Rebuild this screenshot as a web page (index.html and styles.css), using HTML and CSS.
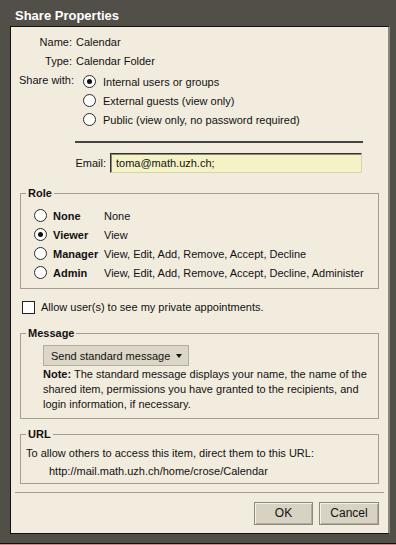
FILE: index.html
```html
<!DOCTYPE html>
<html lang="en">
<head>
  <meta charset="UTF-8" />
  <title>Share Properties</title>
  <link rel="stylesheet" href="styles.css">
</head>
<body>
  <div class="dialog">
    <div class="titlebar">Share Properties</div>

    <div class="panel">
      <div class="props">
        <div class="prop"><span class="prop-label">Name:</span><span>Calendar</span></div>
        <div class="prop"><span class="prop-label">Type:</span><span>Calendar Folder</span></div>
        <div class="prop share">
          <span class="prop-label">Share with:</span>
          <div class="share-opts">
            <div class="opt"><span class="radio on"></span>Internal users or groups</div>
            <div class="opt"><span class="radio"></span>External guests (view only)</div>
            <div class="opt"><span class="radio"></span>Public (view only, no password required)</div>
          </div>
        </div>
      </div>

      <div class="rule"></div>

      <div class="email-row">
        <span class="email-label">Email:</span>
        <div class="email-input">toma@math.uzh.ch;</div>
      </div>

      <fieldset class="box role">
        <legend>Role</legend>
        <div class="role-list">
          <div class="role-row"><span class="radio"></span><span class="role-name">None</span><span>None</span></div>
          <div class="role-row"><span class="radio on"></span><span class="role-name">Viewer</span><span>View</span></div>
          <div class="role-row"><span class="radio"></span><span class="role-name">Manager</span><span>View, Edit, Add, Remove, Accept, Decline</span></div>
          <div class="role-row"><span class="radio"></span><span class="role-name">Admin</span><span>View, Edit, Add, Remove, Accept, Decline, Administer</span></div>
        </div>
      </fieldset>

      <div class="check-row"><span class="checkbox"></span>Allow user(s) to see my private appointments.</div>

      <fieldset class="box message">
        <legend>Message</legend>
        <div class="message-body">
          <div class="dropdown">Send standard message<span class="caret"></span></div>
          <p class="note"><b>Note:</b> The standard message displays your name, the name of the shared item, permissions you have granted to the recipients, and login information, if necessary.</p>
        </div>
      </fieldset>

      <fieldset class="box url">
        <legend>URL</legend>
        <div class="url-text">To allow others to access this item, direct them to this URL:</div>
        <div class="url-text url-link">http://mail.math.uzh.ch/home/crose/Calendar</div>
      </fieldset>

      <div class="sep"></div>

      <div class="buttons">
        <div class="btn btn-ok">OK</div>
        <div class="btn btn-cancel">Cancel</div>
      </div>
    </div>

    <div class="frame-foot"></div>
  </div>
</body>
</html>
```

FILE: styles.css
```css
body {
  margin: 0;
  background: #524f48;
  font-family: "Liberation Sans", Arial, sans-serif;
  font-size: 11px;
  color: #111;
}

.dialog {
  width: 396px;
  height: 545px;
  background: #524f48;
  overflow: hidden;
}

.titlebar {
  height: 26px;
  box-sizing: border-box;
  padding: 4px 0 0 15px;
  line-height: 24px;
  color: #fff;
  font-weight: bold;
  font-size: 13px;
}

.panel {
  margin-left: 10px;
  width: 377px;
  height: 506px;
  background: #f2ecdf;
  border: 1px solid #111;
  border-right: 2px solid #8b877e;
}

.frame-foot {
  height: 9px;
  border-bottom: 1px solid #111;
  box-shadow: 0 1px 0 #d98585;
}

/* name / type / share with */
.props {
  padding: 6px 0 0 8px;
}

.prop {
  display: flex;
  height: 19px;
  line-height: 19px;
}

.prop-label {
  width: 53px;
  margin-right: 4px;
  text-align: right;
  white-space: nowrap;
}

.prop.share {
  height: auto;
  margin-top: 1px;
  line-height: 16px;
}

.share-opts {
  margin-left: 7px;
}

.opt {
  display: flex;
  align-items: center;
  height: 19px;
}

.opt .radio {
  margin-right: 7px;
}

.radio {
  position: relative;
  flex: none;
  width: 13px;
  height: 13px;
  box-sizing: border-box;
  border: 1px solid #2a2a2a;
  border-radius: 50%;
  background: #fff;
}

.radio.on::after {
  content: "";
  position: absolute;
  left: 3px;
  top: 3px;
  width: 5px;
  height: 5px;
  border-radius: 50%;
  background: #111;
}

.rule {
  margin: 12px 0 0 64px;
  width: 288px;
  border-top: 2px solid #444;
}

.email-row {
  display: flex;
  align-items: center;
  margin-top: 10px;
}

.email-label {
  width: 95px;
  margin-right: 4px;
  text-align: right;
}

.email-input {
  width: 252px;
  height: 20px;
  box-sizing: border-box;
  padding-left: 5px;
  line-height: 18px;
  background: #f5f2c6;
  border: 1px solid;
  border-color: #333 #d6d2b2 #d6d2b2 #333;
  box-shadow: inset 1px 1px 0 #8a887a;
}

/* group boxes */
.box {
  margin: 0 9px;
  padding: 0 10px 0 5px;
  border: 1px solid #a39e91;
}

.box legend {
  padding: 0 2px;
  line-height: 14px;
  font-weight: bold;
}

.role {
  margin-top: 13px;
  padding-top: 6px;
  padding-bottom: 6px;
}

.role-list {
  margin-left: 8px;
}

.role-row {
  display: flex;
  align-items: center;
  height: 19px;
  white-space: nowrap;
}

.role-row .radio {
  margin-right: 6px;
}

.role-name {
  width: 51px;
  font-weight: bold;
}

.check-row {
  display: flex;
  align-items: center;
  height: 16px;
  margin: 10px 0 0 11px;
}

.checkbox {
  width: 13px;
  height: 13px;
  box-sizing: border-box;
  margin-right: 6px;
  border: 1px solid #222;
  background: #fff;
}

.message {
  margin-top: 11px;
  padding-top: 5px;
  padding-bottom: 6px;
}

.message-body {
  margin-left: 17px;
}

.dropdown {
  display: flex;
  align-items: center;
  width: 146px;
  height: 21px;
  box-sizing: border-box;
  padding-left: 7px;
  border: 1px solid #b3aea1;
  background: #dcd6c7;
}

.caret {
  margin: 0 6px 0 auto;
  border-left: 3.5px solid transparent;
  border-right: 3.5px solid transparent;
  border-top: 4px solid #111;
}

.note {
  margin: 1px 0 0;
  line-height: 15px;
}

.url {
  margin-top: 8px;
  padding-top: 3px;
  padding-bottom: 3px;
}

.url-text {
  line-height: 18px;
  white-space: nowrap;
}

.url-link {
  padding-left: 23px;
}

.sep {
  margin: 8px 4px 0;
  border-top: 1px solid #a49f92;
}

.buttons {
  display: flex;
  justify-content: flex-end;
  gap: 6px;
  margin-top: 9px;
  padding-right: 9px;
}

.btn {
  height: 23px;
  box-sizing: border-box;
  line-height: 21px;
  text-align: center;
  font-size: 12px;
  background: #d8d2c3;
  border: 1px solid #8e897e;
  box-shadow: inset 1px 1px 0 #f4f0e6, inset -1px -1px 0 #b0ab9e;
}

.btn-ok {
  width: 59px;
}

.btn-cancel {
  width: 60px;
}
```
